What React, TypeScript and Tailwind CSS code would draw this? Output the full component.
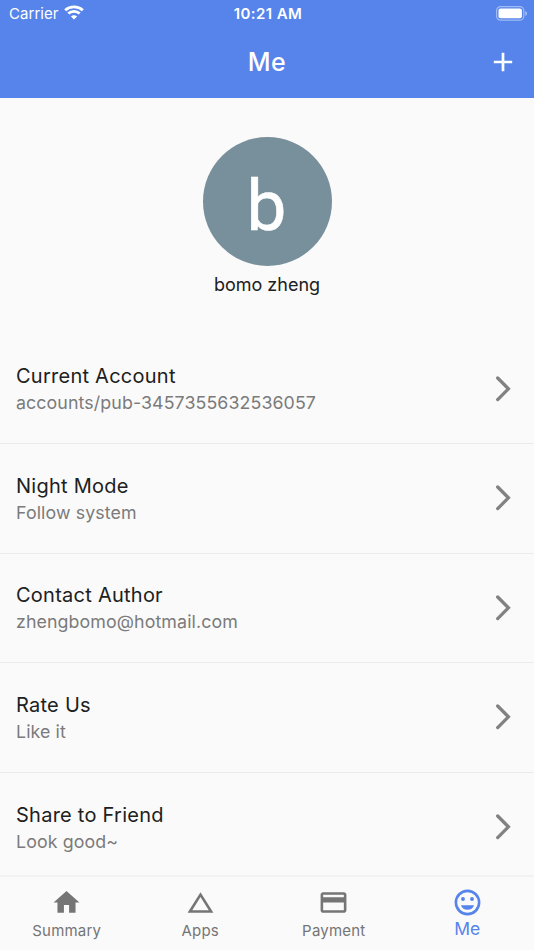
import { MdChangeHistory, MdHome, MdPayment } from "react-icons/md";
import type { ComponentType, SVGProps } from "react";
import clsx from "clsx";

interface SettingItem {
  title: string;
  subtitle: string;
}

interface TabItem {
  label: string;
  icon: ComponentType<SVGProps<SVGSVGElement>>;
}

const settings: SettingItem[] = [
  { title: "Current Account", subtitle: "accounts/pub-3457355632536057" },
  { title: "Night Mode", subtitle: "Follow system" },
  { title: "Contact Author", subtitle: "zhengbomo@hotmail.com" },
  { title: "Rate Us", subtitle: "Like it" },
  { title: "Share to Friend", subtitle: "Look good~" },
];

function SmileIcon(props: SVGProps<SVGSVGElement>) {
  return (
    <svg viewBox="0 0 24 24" fill="currentColor" {...props}>
      <circle cx="12" cy="12" r="9" fill="none" stroke="currentColor" strokeWidth="2" />
      <circle cx="8.5" cy="9.3" r="1.5" />
      <circle cx="15.5" cy="9.3" r="1.5" />
      <path d="M12 17.7c2.35 0 4.3-1.4 5.1-3.6H6.9c.8 2.2 2.75 3.6 5.1 3.6z" />
    </svg>
  );
}

const tabs: TabItem[] = [
  { label: "Summary", icon: MdHome },
  { label: "Apps", icon: MdChangeHistory },
  { label: "Payment", icon: MdPayment },
  { label: "Me", icon: SmileIcon },
];

function StatusBar() {
  return (
    <div className="grid h-7 grid-cols-3 items-center pl-[9px] pr-[7px] text-[15px] leading-7">
      <div className="flex items-center gap-[5px]">
        <span className="tracking-[0.05px]">Carrier</span>
        <svg className="-mt-[3px]" width="20" height="15" viewBox="0 0 20 15" fill="none" stroke="#fff" strokeWidth="2.8" aria-hidden>
          <path d="M1.2 5.2C6 .7 14 .7 18.8 5.2" />
          <path d="M4.3 8.6C7.4 5.6 12.6 5.6 15.7 8.6" />
          <path d="M10 14.5 6.9 11.4C8.6 9.8 11.4 9.8 13.1 11.4Z" fill="#fff" stroke="none" />
        </svg>
      </div>
      <span className="text-center font-semibold tracking-[0.4px]">10:21 AM</span>
      <svg className="-mt-px justify-self-end" width="31" height="15" viewBox="0 0 31 15" aria-hidden>
        <rect x="0.6" y="0.6" width="27.2" height="13.6" rx="4" fill="none" stroke="#fff" strokeOpacity="0.45" strokeWidth="1.2" />
        <rect x="2.5" y="2.5" width="23.4" height="9.8" rx="2" fill="#fff" />
        <path d="M29.3 5v5q1.7-.7 1.7-2.5T29.3 5Z" fill="#fff" fillOpacity="0.5" />
      </svg>
    </div>
  );
}

function SettingRow({ title, subtitle }: SettingItem) {
  return (
    <li className="flex h-[109.6px] shrink-0 items-center justify-between border-b border-[#ebebeb] pl-4 pr-[23px]">
      <div className="pt-[2px]">
        <p className="text-[20px] leading-[26px] tracking-[0.25px] text-[#202020]">{title}</p>
        <p className="text-[17.8px] leading-[27px] tracking-[0.1px] text-[#7b7b7b]">{subtitle}</p>
      </div>
      <svg
        width="16"
        height="26"
        viewBox="0 0 16 26"
        fill="none"
        stroke="#828282"
        strokeWidth="3.3"
        strokeLinecap="round"
        aria-hidden
      >
        <path d="M2.7 2 13.4 12.8 2.7 23.6" />
      </svg>
    </li>
  );
}

export default function App() {
  const activeTab = "Me";

  return (
    <div className="flex h-[950px] w-[534px] flex-col overflow-hidden bg-[#fafafa] font-[Inter,sans-serif]">
      <header className="h-[98px] shrink-0 bg-[#5684eb] text-white">
        <StatusBar />
        <div className="grid h-[70px] grid-cols-3 items-center pr-[21px]">
          <h1 className="col-start-2 pl-[21px] text-center text-[25px] font-medium tracking-[0.4px]">Me</h1>
          <button type="button" aria-label="Add" className="-mt-[2px] justify-self-end">
            <svg width="20" height="20" viewBox="0 0 20 20" stroke="#fff" strokeWidth="2.7" aria-hidden>
              <path d="M10 .8v18.4M.8 10h18.4" />
            </svg>
          </button>
        </div>
      </header>

      <main className="min-h-0 flex-1 overflow-hidden">
        <section className="flex h-[236.4px] flex-col items-center pt-[39px]">
          <div className="flex size-[129px] items-center justify-center rounded-full bg-[#78909c]">
            <span className="pt-[7px] pr-[1px] font-[Roboto,sans-serif] text-[71px] leading-none text-white [-webkit-text-stroke:0.6px_white]">
              b
            </span>
          </div>
          <p className="mt-[5px] text-[18px] leading-[27px] text-[#202020]">bomo zheng</p>
        </section>
        <ul>
          {settings.map((item) => (
            <SettingRow key={item.title} {...item} />
          ))}
        </ul>
      </main>

      <nav className="grid h-[75px] shrink-0 grid-cols-4 border-t-2 border-[#f2f2f2] bg-[#fafafa]">
        {tabs.map(({ label, icon: Icon }) => {
          const active = label === activeTab;
          return (
            <button
              key={label}
              type="button"
              className={clsx("flex flex-col items-center pt-[10px]", active ? "text-[#5684eb]" : "text-[#757575]")}
            >
              <Icon className="size-[31px]" aria-hidden />
              <span
                className={clsx(
                  active ? "text-[17.5px] leading-[22px]" : "text-[15px] leading-[25px] tracking-[0.2px]"
                )}
              >
                {label}
              </span>
            </button>
          );
        })}
      </nav>
    </div>
  );
}
